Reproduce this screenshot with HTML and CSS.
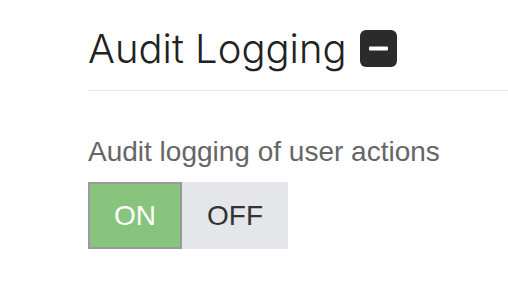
FILE: index.html
```html
<!DOCTYPE html>
<html lang="en">
<head>
    <meta charset="UTF-8">
    <title>Audit Logging</title>
    <link rel="stylesheet" href="styles.css">
</head>
<body>
<div class="section">
    <div class="heading">
        <h1>Audit Logging</h1>
        <span class="collapse">
            <svg width="37" height="37" viewBox="0 0 37 37">
                <rect x="0" y="0" width="37" height="37" rx="6" fill="#2b2b2b"/>
                <rect x="9" y="16.5" width="19" height="4" rx="1" fill="#ffffff"/>
            </svg>
        </span>
    </div>
    <div class="body">
        <label class="label">Audit logging of user actions</label>
        <div class="toggle">
            <button class="opt on">ON</button>
            <button class="opt off">OFF</button>
        </div>
    </div>
</div>
</body>
</html>
```

FILE: styles.css
```css
body {
    margin: 0;
    background: #ffffff;
    font-family: "Liberation Sans", Arial, sans-serif;
}

.section {
    padding: 22px 0 0 88px;
}

.heading {
    display: flex;
    align-items: center;
    gap: 13px;
    height: 53px;
    padding-bottom: 15px;
    border-bottom: 1px solid #e8e8e8;
}

.heading h1 {
    margin: 0;
    font-size: 40px;
    font-weight: 300;
    font-family: "Inter", "Liberation Sans", sans-serif;
    color: #222222;
}

.collapse {
    display: flex;
}

.body {
    padding-top: 45px;
}

.label {
    display: block;
    font-size: 28px;
    line-height: 32px;
    color: #666666;
}

.toggle {
    display: flex;
    margin-top: 14px;
}

.opt {
    border: 0;
    height: 67px;
    font-family: "Liberation Sans", Arial, sans-serif;
    font-size: 28px;
    padding: 0;
}

.on {
    width: 94px;
    background: #88c47e;
    color: #ffffff;
    border: 2px solid #9a9a9a;
}

.off {
    width: 106px;
    background: #e5e6ea;
    color: #333333;
}
```
